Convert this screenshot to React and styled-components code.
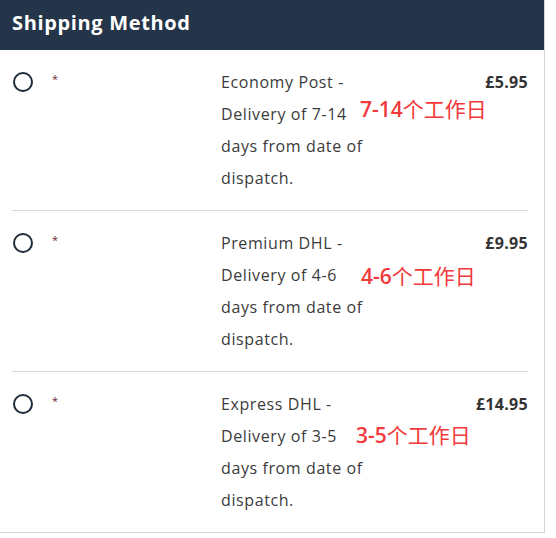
import React from "react";
import styled, { createGlobalStyle } from "styled-components";

const Global = createGlobalStyle`
  html, body { margin: 0; padding: 0; background: #ffffff; }
  body { font-family: "Open Sans", "Noto Sans", sans-serif; }
`;

const Panel = styled.section`
  width: 544px;
  border-right: 1px solid #d4d4d4;
  border-bottom: 1px solid #d4d4d4;
  background: #fff;
`;

const Header = styled.header`
  height: 50px;
  background: #243449;
  display: flex;
  align-items: center;
  padding: 0 12px 5px;
  box-sizing: border-box;
`;

const Title = styled.h2`
  margin: 0;
  color: #ffffff;
  font-family: "Open Sans", sans-serif;
  font-weight: 700;
  font-size: 20px;
  letter-spacing: 0.65px;
`;

const List = styled.div`
  padding: 0 16px 0 12px;
`;

const Row = styled.label`
  position: relative;
  display: grid;
  grid-template-columns: 28px 181px 144px 1fr;
  padding: 16px 0;
  border-top: ${(p) => (p.$first ? "none" : "1px solid #d6d6d6")};
`;

const RadioCell = styled.div`
  height: 32px;
  display: flex;
  align-items: center;
`;

const Radio = styled.span`
  width: 20px;
  height: 20px;
  box-sizing: border-box;
  border: 2px solid #1e2b3a;
  border-radius: 50%;
  margin-left: 1px;
`;

const Asterisk = styled.span`
  padding-left: 12px;
  color: #6e2535;
  font-size: 11px;
  line-height: 26px;
`;

const Desc = styled.div`
  font-size: 16px;
  line-height: 32px;
  color: #3b3b3b;
  font-weight: 400;
  letter-spacing: 0.6px;
`;

const Price = styled.div`
  text-align: right;
  font-size: 16px;
  line-height: 32px;
  font-weight: 700;
  color: #333333;
  letter-spacing: 0.3px;
`;

const Note = styled.span`
  position: absolute;
  left: ${(p) => p.$left}px;
  top: ${(p) => p.$top}px;
  color: #f2393b;
  font-family: "Open Sans", "Noto Sans CJK SC", sans-serif;
  font-size: 21px;
  line-height: 24px;
  white-space: nowrap;
`;

const NoteNum = styled.span`
  font-weight: 600;
`;

const NoteText = styled.span`
  font-family: "Noto Sans CJK SC", sans-serif;
  font-weight: 400;
`;

const methods = [
  { name: "Economy Post - Delivery of 7-14 days from date of dispatch.", price: "£5.95", num: "7-14", left: 348, top: 46 },
  { name: "Premium DHL - Delivery of 4-6 days from date of dispatch.", price: "£9.95", num: "4-6", left: 349, top: 52 },
  { name: "Express DHL - Delivery of 3-5 days from date of dispatch.", price: "£14.95", num: "3-5", left: 344, top: 50 },
];

export default function App() {
  return (
    <>
      <Global />
      <Panel>
        <Header>
          <Title>Shipping Method</Title>
        </Header>
        <List>
          {methods.map((m, i) => (
            <Row key={m.price} $first={i === 0}>
              <RadioCell>
                <Radio />
              </RadioCell>
              <Asterisk>*</Asterisk>
              <Desc>{m.name}</Desc>
              <Price>{m.price}</Price>
              <Note $left={m.left} $top={m.top}>
                <NoteNum>{m.num}</NoteNum>
                <NoteText>个工作日</NoteText>
              </Note>
            </Row>
          ))}
        </List>
      </Panel>
    </>
  );
}
